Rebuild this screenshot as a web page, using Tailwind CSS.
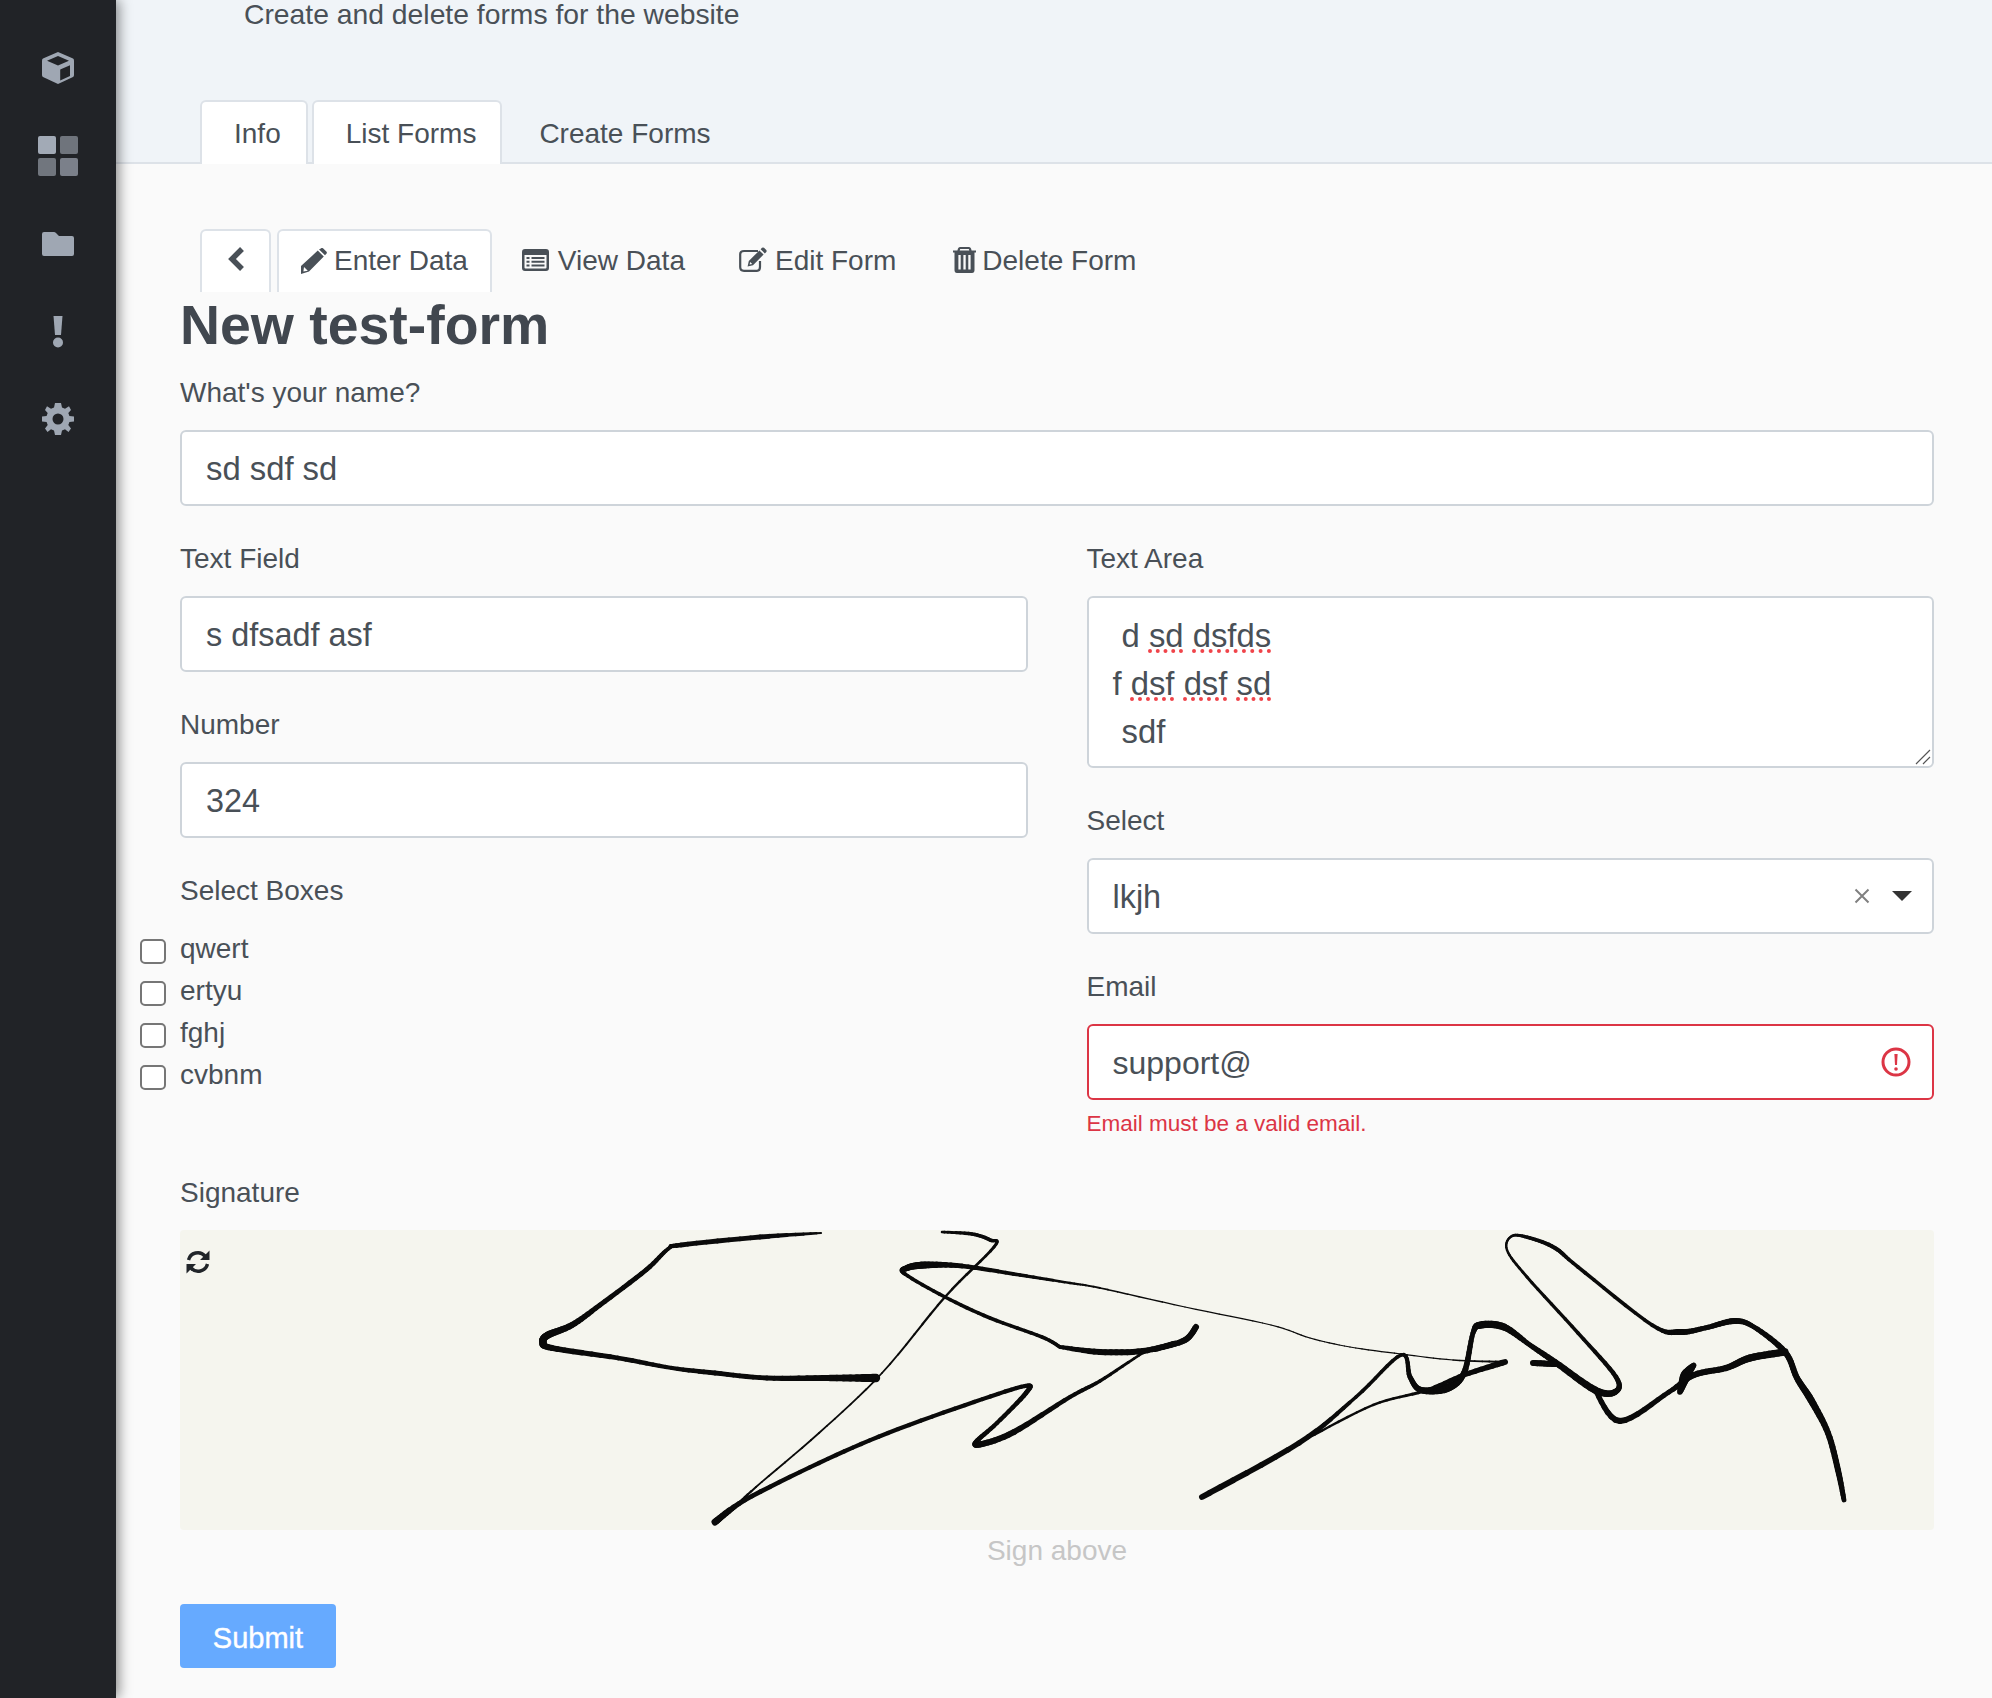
<!DOCTYPE html>
<html lang="en">

<head>
  <meta charset="UTF-8" />
  <title>Forms</title>
  <script src="https://cdn.jsdelivr.net/npm/@tailwindcss/browser@4"></script>
</head>

<body class="bg-[#fafafa] text-[#495057] text-[28px] font-['Liberation_Sans',Arial,sans-serif] h-[1698px] overflow-hidden flex">
  <!-- sidebar -->
  <nav class="w-[116px] shrink-0 bg-[#212327] shadow-[3px_0_12px_rgba(0,0,0,0.45)] z-10 flex flex-col items-center pt-[52px]">
    <svg class="w-[32px] h-[32px]" viewBox="0 0 32 32">
      <path fill="#9fa7b3" d="M16 0 L31 6.5 Q32 7 32 8.5 V23 Q32 24.5 31 25 L16 32 L1 25 Q0 24.5 0 23 V8.5 Q0 7 1 6.5 Z" />
      <path fill="#212327" d="M16 4 L27 8.7 L16 13.4 L5 8.7 Z M18.2 17.5 L28 13.2 V24 L18.2 28.4 Z" />
    </svg>
    <div class="grid grid-cols-2 gap-[4px] mt-[52px] w-[40px]">
      <div class="h-[18px] rounded-[2px] bg-[#a2aab6]"></div>
      <div class="h-[18px] rounded-[2px] bg-[#6f747c]"></div>
      <div class="h-[18px] rounded-[2px] bg-[#71767e]"></div>
      <div class="h-[18px] rounded-[2px] bg-[#7b808a]"></div>
    </div>
    <svg class="w-[32px] h-[24px] mt-[56px]" viewBox="0 0 32 24">
      <path fill="#9fa7b3" d="M2 0 H12 Q13 0 14 1 L17 4 H30 Q32 4 32 6 V22 Q32 24 30 24 H2 Q0 24 0 22 V2 Q0 0 2 0 Z" />
    </svg>
    <svg class="w-[10px] h-[32px] mt-[60px]" viewBox="0 0 10 32">
      <path fill="#9fa7b3" d="M0.5 0 H9.5 L8 19 H2 Z" />
      <circle fill="#9fa7b3" cx="5" cy="26.5" r="5" />
    </svg>
    <svg class="w-[32px] h-[32px] mt-[55px]" viewBox="0 0 32 32">
      <path fill="#9fa7b3" fill-rule="evenodd" d="M13 0 H19 L20 4.5 L23 5.8 L27 3.3 L29 7 L26.3 10 L27.4 13 L32 13.5 V18.5 L27.4 19 L26.3 22 L29 25.5 L26.5 29 L23 26.3 L20 27.5 L19 32 H13 L12 27.5 L9 26.3 L5.5 29 L3 25.5 L5.7 22 L4.6 19 L0 18.5 V13.5 L4.6 13 L5.7 10 L3 7 L5 3.3 L9 5.8 L12 4.5 Z M16 10.5 A5.5 5.5 0 1 0 16 21.5 A5.5 5.5 0 1 0 16 10.5 Z" />
    </svg>
  </nav>

  <main class="flex-1 min-w-0">
    <header class="h-[164px] bg-[#f0f4f8] border-b-2 border-[#dde2e8] flex flex-col justify-between">
      <p class="pl-[128px] leading-[28px] text-[28.3px]">Create and delete forms for the website</p>
      <div class="flex gap-[4px] pl-[84px] -mb-[2px] leading-[34px]">
        <a class="h-[64px] pl-[32px] pr-[25px] pt-[15px] border-2 border-b-0 border-[#dde2e8] rounded-t-[6px] bg-white">Info</a>
        <a class="h-[64px] pl-[32px] pr-[24px] pt-[15px] border-2 border-b-0 border-[#dde2e8] rounded-t-[6px] bg-white">List Forms</a>
        <a class="h-[64px] pl-[31px] pr-[24px] pt-[15px] border-2 border-b-0 border-transparent">Create Forms</a>
      </div>
    </header>

    <div class="flex gap-[6px] pl-[84px] mt-[65px] leading-[34px]">
      <a class="h-[63px] w-[71px] flex justify-center pt-[15px] border-2 border-b-0 border-[#dde2e8] rounded-t-[6px] bg-white">
        <svg class="w-[18px] h-[26px]" viewBox="0 0 18 26"><path fill="none" stroke="#495057" stroke-width="5.5" d="M15 3 L5 13 L15 23" /></svg>
      </a>
      <a class="h-[63px] pl-[22px] pr-[22px] pt-[13px] flex border-2 border-b-0 border-[#dde2e8] rounded-t-[6px] bg-white">
        <svg class="w-[26px] h-[26px] mt-[4px] mr-[7px]" viewBox="0 0 26 26">
          <path fill="#495057" fill-rule="evenodd" d="M19 1 L20.5 0 Q21.5 -0.3 22.5 0.7 L25.3 3.5 Q26.3 4.5 25.6 5.6 L24 7.2 L18 1.4 Z M16.8 2.6 L22.8 8.6 L8 23.5 L0 26 L0 18 Z M3 19 L2.4 23.4 L6.8 22.8 Z" />
        </svg>
        Enter Data
      </a>
      <a class="h-[63px] pl-[22px] pr-[21px] pt-[13px] flex border-2 border-b-0 border-transparent">
        <svg class="w-[27px] h-[22px] mt-[5px] mr-[9px]" viewBox="0 0 27 22">
          <path fill="#495057" fill-rule="evenodd" d="M3 0 H24 Q27 0 27 3 V19 Q27 22 24 22 H3 Q0 22 0 19 V3 Q0 0 3 0 Z M2.5 6 V18.5 Q2.5 19.5 3.5 19.5 H23.5 Q24.5 19.5 24.5 18.5 V6 Z M4.5 8 H7.5 V10 H4.5 Z M9.5 8 H22.5 V10 H9.5 Z M4.5 11.7 H7.5 V13.7 H4.5 Z M9.5 11.7 H22.5 V13.7 H9.5 Z M4.5 15.4 H7.5 V17.4 H4.5 Z M9.5 15.4 H22.5 V17.4 H9.5 Z" />
        </svg>
        View Data
      </a>
      <a class="h-[63px] pl-[23px] pr-[21px] pt-[13px] flex border-2 border-b-0 border-transparent">
        <svg class="w-[28px] h-[25px] mt-[3px] mr-[8px]" viewBox="0 0 28 25">
          <path fill="none" stroke="#495057" stroke-width="2.2" d="M19 4 H5 Q1.2 4 1.2 7 V20 Q1.2 23.8 5 23.8 H18 Q21 23.8 21 20 V14" />
          <path fill="#495057" fill-rule="evenodd" d="M23 0.8 Q24 0 25 0.8 L27.3 3 Q28 4 27.3 5 L25.8 6.4 L21.6 2.2 Z M20.4 3.4 L24.6 7.6 L14 18.2 L8.6 19.4 L9.8 14 Z M11.2 15 L10.6 17.6 L13.2 17 Z" />
        </svg>
        Edit Form
      </a>
      <a class="h-[63px] pl-[26px] pr-[21px] pt-[13px] flex border-2 border-b-0 border-transparent">
        <svg class="w-[23px] h-[26px] mt-[3px] mr-[6px]" viewBox="0 0 23 26">
          <path fill="#495057" fill-rule="evenodd" d="M7 0 H16 Q17.5 0 18 1.5 L18.6 3.5 H23 V5.6 H21.5 V23 Q21.5 26 19 26 H4 Q1.5 26 1.5 23 V5.6 H0 V3.5 H4.4 L5 1.5 Q5.5 0 7 0 Z M7.2 2 L6.7 3.5 H16.3 L15.8 2 Z M5.4 8 V22.5 H7.7 V8 Z M10.4 8 V22.5 H12.7 V8 Z M15.3 8 V22.5 H17.6 V8 Z" />
        </svg>
        Delete Form
      </a>
    </div>

    <form class="pl-[64px] pr-[58px]">
      <h1 class="text-[55.4px] leading-[66px] font-bold text-[#41474f] mb-[17px]">New test-form</h1>

      <label class="block leading-[36px] mb-[19px]">What's your name?</label>
      <input value="sd sdf sd" class="w-full h-[76px] px-6 pt-[2px] bg-white border-2 border-[#ced4da] rounded-[6px] text-[32.8px] mb-[34px]" />

      <div class="grid grid-cols-2 gap-x-[59px]">
        <div>
          <label class="block leading-[38px] mb-[18px]">Text Field</label>
          <input value="s dfsadf asf" class="w-full h-[76px] px-6 pt-[2px] bg-white border-2 border-[#ced4da] rounded-[6px] text-[32.4px] mb-[34px]" />

          <label class="block leading-[38px] mb-[18px]">Number</label>
          <input value="324" class="w-full h-[76px] px-6 pt-[2px] bg-white border-2 border-[#ced4da] rounded-[6px] text-[32.4px] mb-[34px]" />

          <label class="block leading-[38px] mb-[19px]">Select Boxes</label>
          <div class="-ml-[40px] leading-[42px]">
            <label class="flex items-center gap-[14px] h-[42px]"><span class="w-[26px] h-[25px] mt-[3px] border-2 border-[#767676] rounded-[5px] bg-white"></span><span class="-mt-[3px]">qwert</span></label>
            <label class="flex items-center gap-[14px] h-[42px]"><span class="w-[26px] h-[25px] mt-[3px] border-2 border-[#767676] rounded-[5px] bg-white"></span><span class="-mt-[3px]">ertyu</span></label>
            <label class="flex items-center gap-[14px] h-[42px]"><span class="w-[26px] h-[25px] mt-[3px] border-2 border-[#767676] rounded-[5px] bg-white"></span><span class="-mt-[3px]">fghj</span></label>
            <label class="flex items-center gap-[14px] h-[42px]"><span class="w-[26px] h-[25px] mt-[3px] border-2 border-[#767676] rounded-[5px] bg-white"></span><span class="-mt-[3px]">cvbnm</span></label>
          </div>
        </div>

        <div>
          <label class="block leading-[38px] mb-[18px]">Text Area</label>
          <div class="relative h-[172px] px-6 pt-[14px] bg-white border-2 border-[#ced4da] rounded-[6px] text-[32.8px] leading-[48px] whitespace-pre mb-[34px]"><div> d <span class="underline decoration-dotted decoration-[#f0444a] decoration-[4px] underline-offset-[2px]">sd</span> <span class="underline decoration-dotted decoration-[#f0444a] decoration-[4px] underline-offset-[2px]">dsfds</span></div><div>f <span class="underline decoration-dotted decoration-[#f0444a] decoration-[4px] underline-offset-[2px]">dsf</span> <span class="underline decoration-dotted decoration-[#f0444a] decoration-[4px] underline-offset-[2px]">dsf</span> <span class="underline decoration-dotted decoration-[#f0444a] decoration-[4px] underline-offset-[2px]">sd</span></div><div> sdf</div>
            <svg class="absolute right-[1px] bottom-[1px] w-[16px] h-[16px]" viewBox="0 0 16 16"><path fill="none" stroke="#555" stroke-width="1.2" d="M1 15 L15 1 M8 15 L15 8" /></svg>
          </div>

          <label class="block leading-[38px] mb-[18px]">Select</label>
          <div class="flex items-center h-[76px] px-6 pr-[20px] pt-[2px] bg-white border-2 border-[#ced4da] rounded-[6px] text-[32.4px] mb-[34px]">
            <span class="flex-1">lkjh</span>
            <svg class="w-[16px] h-[16px] -mt-[3px] mr-[22px]" viewBox="0 0 16 16"><path fill="none" stroke="#808080" stroke-width="2" d="M1.5 1.5 L14.5 14.5 M14.5 1.5 L1.5 14.5" /></svg>
            <svg class="w-[20px] h-[10px] -mt-[3px]" viewBox="0 0 20 10"><path fill="#333" d="M0 0 H20 L10 10 Z" /></svg>
          </div>

          <label class="block leading-[38px] mb-[18px]">Email</label>
          <div class="flex items-center h-[76px] px-6 pr-[21px] pt-[2px] bg-white border-2 border-[#dc3545] rounded-[6px] text-[32px]">
            <span class="flex-1">support@</span>
            <svg class="w-[30px] h-[30px] -mt-[2px]" viewBox="0 0 30 30">
              <circle cx="15" cy="15" r="13" fill="none" stroke="#dc3545" stroke-width="3" />
              <path fill="#dc3545" d="M13.4 7 H16.6 L16 18 H14 Z" /><circle cx="15" cy="22" r="1.8" fill="#dc3545" />
            </svg>
          </div>
          <p class="text-[#dc3545] text-[22.5px] leading-[32px] mt-[8px] mb-[34px]">Email must be a valid email.</p>
        </div>
      </div>

      <label class="block leading-[38px] mb-[18px]">Signature</label>
      <div class="relative h-[300px] bg-[#f5f5ee] rounded-[4px] overflow-hidden">
        <svg class="absolute left-[6px] top-[20px] w-[24px] h-[24px]" viewBox="0 0 24 24">
          <path fill="none" stroke="#212529" stroke-width="3.4" d="M2.5 10 A9.6 9.6 0 0 1 19 6 M21.5 14 A9.6 9.6 0 0 1 5 18" />
          <path fill="#212529" d="M23.5 0.5 V10 H14 Z M0.5 23.5 V14 H10 Z" />
        </svg>
        <svg id="signature" class="w-full h-full blur-[0.4px]" viewBox="180 1230 1754 300"></svg>
      </div>
      <p class="text-center text-[#c6c6c6] leading-[36px] mt-[3px]">Sign above</p>

      <button type="button" class="block mt-[35px] w-[156px] h-[64px] pt-[6px] bg-[#66aaff] rounded-[4px] text-white text-[29px] [-webkit-text-stroke:0.4px_white]">Submit</button>
    </form>
  </main>

  <script>
    // signature strokes: x, y, width
    const strokes = [
      [[821,1233,1.5],[760,1237,4],[681,1245,4],[668,1249,3],[646,1270,4],[600,1305,4],[572,1325,5],[548,1335,6],[543,1342,6],[552,1348,5],[618,1358,4],[672,1368,3.5],[715,1373,4],[767,1378,4],[830,1378,5],[876,1378,7]],
      [[942,1232,2],[972,1234,3],[990,1240,3],[994,1247,2.5],[945,1297,2],[882,1373,1.5],[819,1433,1.5],[756,1487,1.5],[735,1507,3],[715,1522,5]],
      [[715,1522,6],[745,1500,4],[819,1463,3.5],[888,1433,3.5],[974,1402,3.5],[1025,1386,3.5],[1026,1393,4],[997,1423,3.5],[976,1442,4],[982,1444,5],[1014,1432,5],[1070,1397,3.5],[1100,1381,3],[1143,1353,2],[1157,1349,4],[1185,1340,5],[1196,1327,5]],
      [[1060,1347,3],[1042,1337,3],[990,1318,3],[945,1297,3],[905,1274,3],[907,1268,5],[925,1265,6],[962,1266,4],[1020,1275,3],[1070,1283,2],[1100,1288,1.5],[1185,1307,1],[1271,1325,1],[1310,1338,1],[1350,1347,1],[1401,1354,1],[1453,1360,1],[1505,1362,2]],
      [[1060,1347,3],[1100,1352,5],[1143,1351,5],[1175,1343,4]],
      [[1202,1497,5],[1299,1443,4.5],[1356,1397,3],[1401,1355,3],[1410,1377,4],[1421,1390,5],[1447,1388,7],[1464,1373,5],[1473,1333,4],[1481,1325,6],[1504,1327,6],[1530,1345,4],[1555,1362,5],[1595,1390,6],[1615,1392,5],[1616,1377,4],[1578,1333,3],[1527,1277,2.5],[1507,1250,2],[1512,1236,2],[1530,1238,3],[1555,1248,3.5],[1578,1267,3],[1652,1325,3],[1680,1332,5],[1705,1328,4],[1734,1321,5],[1754,1327,4],[1785,1352,5],[1797,1378,5],[1811,1400,6],[1828,1433,5],[1838,1470,5],[1844,1500,4]],
      [[1310,1437,2],[1373,1405,2],[1424,1391,2.5],[1464,1375,4],[1505,1362,5]],
      [[1533,1363,5],[1555,1364,5]],
      [[1595,1390,4],[1620,1421,5],[1669,1392,4],[1694,1375,5],[1726,1368,5],[1750,1358,6],[1785,1352,6]],
      [[1680,1392,4],[1686,1375,9],[1694,1365,4]]
    ];
    const svg = document.getElementById('signature');
    const at = (a, b, c, d, t) => 0.5 * (2 * b + (c - a) * t + (2 * a - 5 * b + 4 * c - d) * t * t + (3 * b - a - 3 * c + d) * t * t * t);
    strokes.forEach(pts => {
      for (let i = 0; i < pts.length - 1; i++) {
        const p0 = pts[Math.max(i - 1, 0)], p1 = pts[i], p2 = pts[i + 1], p3 = pts[Math.min(i + 2, pts.length - 1)];
        let px = p1[0], py = p1[1];
        for (let s = 1; s <= 8; s++) {
          const t = s / 8;
          const x = at(p0[0], p1[0], p2[0], p3[0], t), y = at(p0[1], p1[1], p2[1], p3[1], t);
          const line = document.createElementNS('http://www.w3.org/2000/svg', 'line');
          line.setAttribute('x1', px); line.setAttribute('y1', py);
          line.setAttribute('x2', x); line.setAttribute('y2', y);
          line.setAttribute('stroke', '#0a0a0a');
          line.setAttribute('stroke-linecap', 'round');
          line.setAttribute('stroke-width', 1.2 * (p1[2] + (p2[2] - p1[2]) * t));
          svg.appendChild(line);
          px = x; py = y;
        }
      }
    });
  </script>
</body>

</html>
